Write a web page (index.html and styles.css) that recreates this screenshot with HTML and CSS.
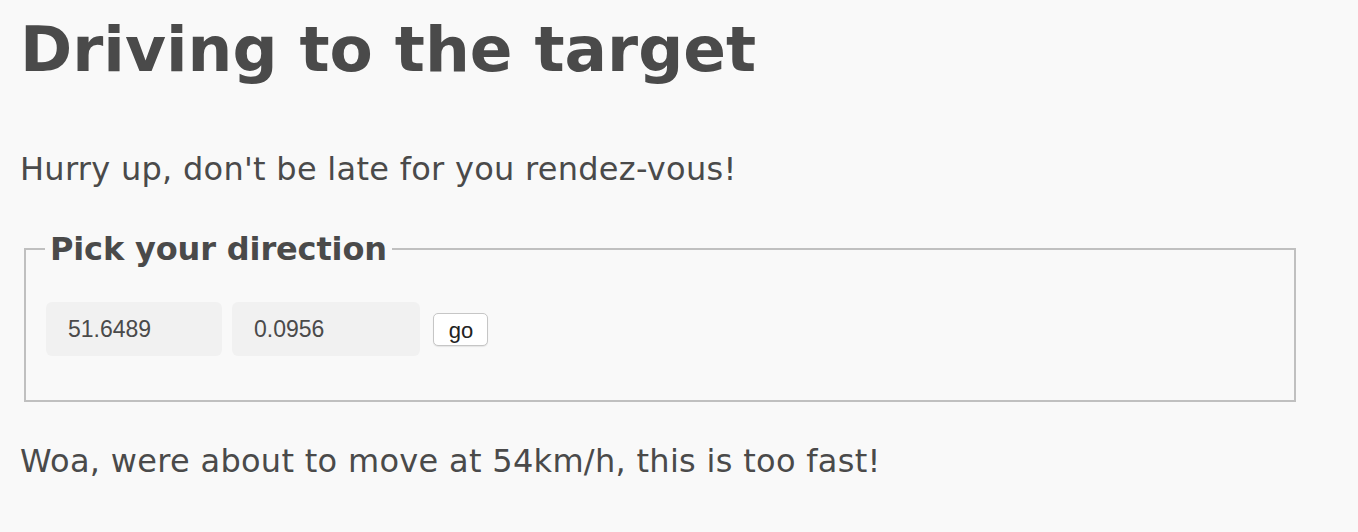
FILE: index.html
```html
<!DOCTYPE html>
<html lang="en">
<head>
<meta charset="utf-8">
<title>Driving to the target</title>
<link rel="stylesheet" href="styles.css">
</head>
<body>
<main class="page">
  <h1 class="title">Driving to the target</h1>
  <p class="lead">Hurry up, don't be late for you rendez-vous!</p>
  <form class="direction-form">
    <fieldset class="direction">
      <legend class="direction-legend">Pick your direction</legend>
      <div class="row">
        <input class="coord coord-lat" type="text" value="51.6489">
        <input class="coord coord-lng" type="text" value="0.0956">
        <button class="go" type="button">go</button>
      </div>
    </fieldset>
  </form>
  <p class="status">Woa, were about to move at 54km/h, this is too fast!</p>
</main>
</body>
</html>
```
FILE: styles.css
```css
html, body {
  margin: 0;
  background: #f9f9f9;
}

body {
  color: #4a4a4a;
  font-family: "DejaVu Sans", Verdana, sans-serif;
  font-size: 32px;
}

.page {
  padding: 13px 20px 0 20px;
}

.title {
  margin: 0;
  font-size: 63px;
  font-weight: bold;
  line-height: normal;
}

.lead {
  margin: 64px 0 0 0;
  line-height: normal;
  letter-spacing: 0.28px;
}

.direction-form {
  margin: 42px 0 0 0;
}

.direction {
  box-sizing: border-box;
  width: 1272px;
  margin: 0 0 0 4px;
  border: 2px solid #c0c0c0;
  padding: 34px 20px 44px 20px;
}

.direction-legend {
  padding: 0 5px;
  margin-left: -1px;
  font-weight: bold;
  font-size: 32px;
  line-height: normal;
  letter-spacing: -0.15px;
}

.row {
  display: flex;
  align-items: center;
  gap: 10px;
}

.coord {
  box-sizing: border-box;
  height: 54px;
  border: 0;
  border-radius: 6px;
  background: #f1f1f1;
  padding: 0 0 0 22px;
  color: #4a4a4a;
  font-family: "Liberation Sans", Arial, sans-serif;
  font-size: 23px;
  outline: none;
}

.coord-lat {
  width: 176px;
}

.coord-lng {
  width: 188px;
}

.go {
  box-sizing: border-box;
  height: 33px;
  width: 55px;
  margin-left: 3px;
  padding: 0 0 0 1px;
  border: 1px solid #c6c6c6;
  border-radius: 5px;
  background: #ffffff;
  box-shadow: 0 1px 1px rgba(0, 0, 0, 0.08);
  color: #222222;
  font-family: "Liberation Sans", Arial, sans-serif;
  font-size: 22px;
  line-height: 33px;
}

.status {
  margin: 40px 0 0 0;
  line-height: normal;
  letter-spacing: 0.3px;
}
```
